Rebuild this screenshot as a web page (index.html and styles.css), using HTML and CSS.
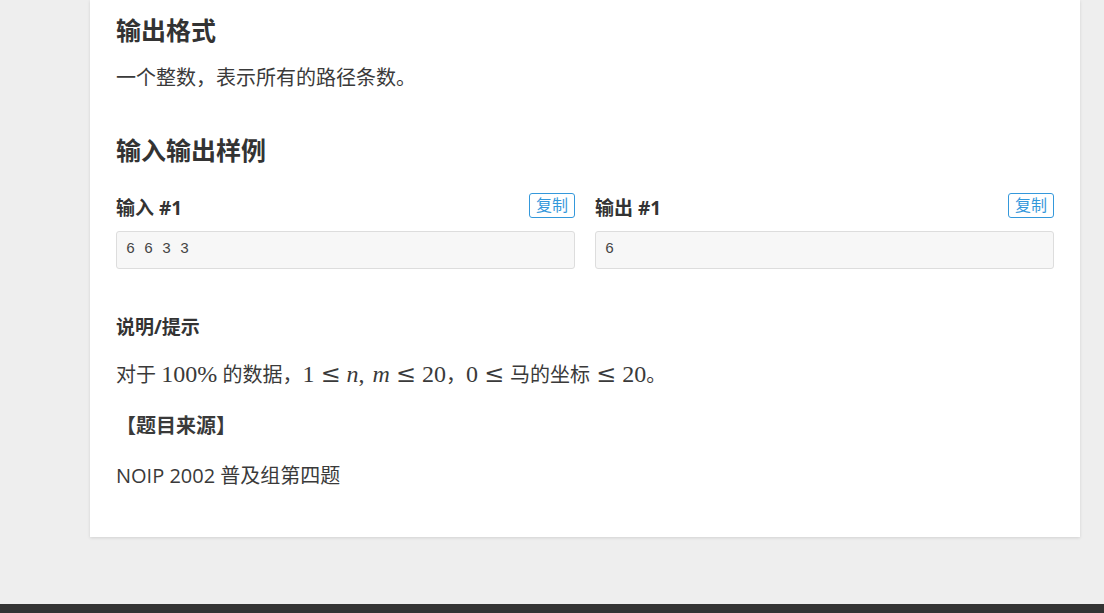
FILE: index.html
```html
<!DOCTYPE html>
<html lang="zh-CN">

<head>
    <meta charset="UTF-8">
    <meta name="viewport" content="width=device-width, initial-scale=1.0">
    <title>题目</title>
    <link rel="stylesheet" href="styles.css">
</head>

<body>
    <div class="card">
        <h2 class="section-title first">输出格式</h2>
        <p class="text">一个整数，表示所有的路径条数。</p>

        <h2 class="section-title samples-title">输入输出样例</h2>
        <div class="samples">
            <div class="sample">
                <div class="sample-head">
                    <h3 class="sample-title">输入 #1</h3>
                    <span class="copy-button">复制</span>
                </div>
                <pre class="sample-data">6 6 3 3</pre>
            </div>
            <div class="sample">
                <div class="sample-head">
                    <h3 class="sample-title">输出 #1</h3>
                    <span class="copy-button">复制</span>
                </div>
                <pre class="sample-data">6</pre>
            </div>
        </div>

        <h3 class="hint-title">说明/提示</h3>
        <p class="text math-line">对于 <span class="math">100%</span> 的数据，<span class="math">1<span class="rel">≤</span><i>n</i>,<i class="after-comma">m</i><span class="rel">≤</span>20</span>，<span class="math">0<span class="rel">≤</span></span>马的坐标<span class="math"><span class="rel">≤</span>20</span>。</p>
        <p class="text source-title"><strong>【题目来源】</strong></p>
        <p class="text source">NOIP 2002 普及组第四题</p>
    </div>

    <div class="footer"></div>
</body>

</html>
```

FILE: styles.css
```css
body {
    margin: 0;
    background-color: #eeeeee;
    font-family: "Open Sans", "Noto Sans CJK SC", sans-serif;
    color: #3a3a3a;
}

.card {
    box-sizing: border-box;
    width: 990px;
    margin-left: 90px;
    padding: 0 26px 46px;
    background-color: #fff;
    box-shadow: 0 1px 3px rgba(0, 0, 0, 0.12);
}

.section-title {
    margin: 0;
    font-size: 25px;
    line-height: 32px;
    font-weight: bold;
    color: #333;
}

.section-title.first {
    padding-top: 14px;
}

.text {
    margin: 17px 0 0;
    font-size: 20px;
    line-height: 30px;
}

.samples-title {
    margin-top: 41px;
}

.samples {
    display: flex;
    gap: 20px;
    margin-top: 27px;
}

.sample {
    flex: 1;
}

.sample-head {
    display: flex;
    justify-content: space-between;
    align-items: flex-start;
    height: 25px;
}

.sample-title,
.hint-title {
    margin: 0;
    font-size: 19px;
    line-height: 28px;
    font-weight: bold;
    color: #333;
}

.sample-title {
    margin-top: 1px;
}

.copy-button {
    box-sizing: border-box;
    height: 25px;
    padding: 0 6px;
    border: 1px solid #3498db;
    border-radius: 3px;
    color: #3498db;
    font-size: 16px;
    line-height: 23px;
}

.sample-data {
    box-sizing: border-box;
    height: 38px;
    margin: 13px 0 0;
    padding: 0 9px;
    background-color: #f7f7f7;
    border: 1px solid #dddddd;
    border-radius: 3px;
    font-family: "Liberation Mono", monospace;
    font-size: 15px;
    line-height: 36px;
    color: #444;
}

.hint-title {
    margin-top: 44px;
}

.math-line {
    margin-top: 16px;
    line-height: 34px;
}

.math {
    font-family: "Liberation Serif", serif;
    font-size: 24px;
}

.rel {
    margin: 0 6px;
    font-family: "DejaVu Serif", serif;
    font-size: 24px;
}

.after-comma {
    margin-left: 8px;
}

.source-title {
    margin-top: 19px;
}

.source {
    margin-top: 20px;
}

.footer {
    height: 20px;
    margin-top: 67px;
    background-color: #333;
}
```
